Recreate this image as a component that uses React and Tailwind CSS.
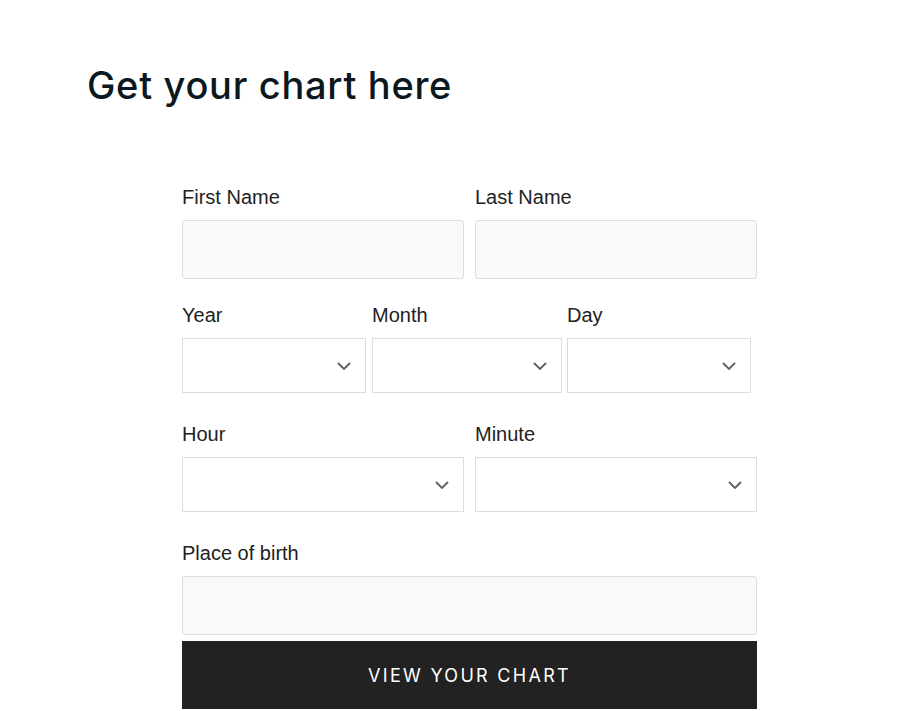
import React from 'react';

/**
 * Chart request form
 *
 * Simple birth data form with a dark submit button
 */
const Chevron = () => (
  <svg
    width="14"
    height="8"
    viewBox="0 0 14 8"
    fill="none"
    className="pointer-events-none absolute right-[14px] top-1/2 -translate-y-1/2"
  >
    <path d="M1 1l6 6 6-6" stroke="#5f5f5f" strokeWidth="1.8" />
  </svg>
);

const Label = ({ children }) => (
  <label className="block text-[20px] leading-[23px] text-[#222222] mb-[11px]">{children}</label>
);

const TextField = ({ label }) => (
  <div className="flex flex-col">
    <Label>{label}</Label>
    <input
      type="text"
      className="h-[59px] w-full rounded-[3px] border border-[#dddddd] bg-[#f9f9f9] px-3 outline-none"
    />
  </div>
);

const SelectField = ({ label, width }) => (
  <div className={`flex flex-col ${width}`}>
    <Label>{label}</Label>
    <div className="relative h-[55px] border border-[#dddddd] bg-white">
      <Chevron />
    </div>
  </div>
);

const App = () => {
  return (
    <div className="min-h-[711px] bg-white overflow-hidden font-['Liberation_Sans',Arial,sans-serif]">
      <h1 className="pl-[87px] pt-[61px] text-[38px] leading-[48px] font-medium tracking-[0.7px] text-[#0c1820] font-['Inter',sans-serif]">
        Get your chart here
      </h1>

      <form className="ml-[182px] mt-[77px] w-[575px]" onSubmit={(e) => e.preventDefault()}>
        {/* Name row */}
        <div className="grid grid-cols-2 gap-x-[11px]">
          <TextField label="First Name" />
          <TextField label="Last Name" />
        </div>

        {/* Date row */}
        <div className="mt-[25px] flex">
          <SelectField label="Year" width="w-[184px]" />
          <SelectField label="Month" width="ml-[6px] w-[190px]" />
          <SelectField label="Day" width="ml-[5px] w-[184px]" />
        </div>

        {/* Time row */}
        <div className="mt-[30px] grid grid-cols-2 gap-x-[11px]">
          <SelectField label="Hour" width="w-full" />
          <SelectField label="Minute" width="w-full" />
        </div>

        {/* Place */}
        <div className="mt-[30px]">
          <TextField label="Place of birth" />
        </div>

        <button
          type="submit"
          className="mt-[6px] h-[68px] w-full bg-[#222222] text-white text-[18px] tracking-[2.3px] font-['Inter',sans-serif]"
        >
          VIEW YOUR CHART
        </button>
      </form>
    </div>
  );
};

export default App;
